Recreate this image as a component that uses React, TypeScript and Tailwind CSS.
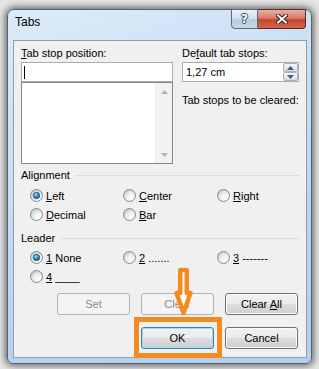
import React from "react";

function Radio({ checked }: { checked?: boolean }) {
  return (
    <svg width="13" height="13" viewBox="0 0 13 13" className="shrink-0">
      <defs>
        <radialGradient id="rOuter" cx="65%" cy="70%" r="75%">
          <stop offset="0" stopColor="#fdfdfd" />
          <stop offset="0.55" stopColor="#ececec" />
          <stop offset="1" stopColor="#c4c4c4" />
        </radialGradient>
        <radialGradient id="rDot" cx="40%" cy="35%" r="70%">
          <stop offset="0" stopColor="#aee6ff" />
          <stop offset="0.45" stopColor="#3a92d0" />
          <stop offset="1" stopColor="#124a7c" />
        </radialGradient>
      </defs>
      <circle cx="6.5" cy="6.5" r="6" fill="url(#rOuter)" stroke="#8a8a8a" strokeWidth="1" />
      {checked && <circle cx="6.5" cy="6.5" r="3.2" fill="url(#rDot)" stroke="#1d4f7a" strokeWidth="0.7" />}
    </svg>
  );
}

function RadioItem({ checked, children }: { checked?: boolean; children: React.ReactNode }) {
  return (
    <div className="flex items-center gap-[3px] h-[19px]">
      <Radio checked={checked} />
      <span className="whitespace-pre">{children}</span>
    </div>
  );
}

function Btn({ children, kind }: { children: React.ReactNode; kind: "normal" | "disabled" | "default" }) {
  const cls =
    kind === "disabled"
      ? "w-[73px] h-[22px] rounded-[3px] border border-[#adb2b5] bg-[#f4f4f4] text-[#8a8a8a] flex items-center justify-center"
      : kind === "default"
      ? "w-[73px] h-[22px] rounded-[3px] border border-[#3c7fb1] bg-[linear-gradient(#f2f2f2_0%,#ebebeb_50%,#dddddd_50%,#cfcfcf_100%)] shadow-[inset_0_0_0_1px_#9fdcfb] flex items-center justify-center"
      : "w-[73px] h-[22px] rounded-[3px] border border-[#707070] bg-[linear-gradient(#f2f2f2_0%,#ebebeb_50%,#dddddd_50%,#cfcfcf_100%)] shadow-[inset_0_0_0_1px_#fbfbfb] flex items-center justify-center";
  return (
    <div className={cls}>
      <span className="whitespace-pre">{children}</span>
    </div>
  );
}

function Tri({ up, color }: { up?: boolean; color: string }) {
  return (
    <svg width="7" height="4" viewBox="0 0 7 4">
      {up ? <polygon points="0,4 7,4 3.5,0" fill={color} /> : <polygon points="0,0 7,0 3.5,4" fill={color} />}
    </svg>
  );
}

function GroupHeader({ label }: { label: React.ReactNode }) {
  return (
    <div className="flex items-center h-[14px] pl-[7px] pr-[6px] gap-[5px]">
      <span>{label}</span>
      <div className="flex-1 h-px bg-[#d5dfe5]" />
    </div>
  );
}

export default function App() {
  return (
    <div className="relative w-[319px] h-[369px] overflow-hidden bg-[#e6e6e6] pl-[7px] pt-[9px] font-['Liberation_Sans',Arial,sans-serif] text-[11px] leading-[14px] text-black">
      <div className="flex flex-col w-[305px] h-[355px] rounded-t-[7px] rounded-b-[6px] border border-[#4f6378] bg-[linear-gradient(160deg,#dcebf9_0%,#c9dff3_35%,#b9d3ed_70%,#b4cfeb_100%)] shadow-[0_0_7px_2px_rgba(0,0,0,0.55)]">
        {/* title bar */}
        <div className="flex justify-between h-[30px] shrink-0">
          <div className="pl-[7px] pt-[5px] text-[12px] leading-[15px]">Tabs</div>
          <div className="flex mr-[5px] -mt-px h-[20px]">
            <div className="w-[27px] h-[20px] rounded-bl-[4px] border border-[#5b6a7c] bg-[linear-gradient(#e9f0f8_0%,#d3e0ee_45%,#b9cbde_55%,#c6d6e7_100%)] flex items-center justify-center">
              <span className="font-['DejaVu_Sans',sans-serif] font-bold text-[12px] leading-[12px] text-white [text-shadow:1px_0_0_#33475c,-1px_0_0_#33475c,0_1px_0_#33475c,0_-1px_0_#33475c]">
                ?
              </span>
            </div>
            <div className="w-[48px] h-[20px] rounded-br-[4px] border border-l-0 border-[#5b2a24] bg-[linear-gradient(#eab0a4_0%,#d87a6a_45%,#c7432f_55%,#d2664f_100%)] flex items-center justify-center">
              <svg width="12" height="10" viewBox="0 0 12 10">
                <path d="M2 1.5 L10 8.5 M10 1.5 L2 8.5" stroke="#3b1d1a" strokeWidth="4" strokeLinecap="square" />
                <path d="M2 1.5 L10 8.5 M10 1.5 L2 8.5" stroke="#ffffff" strokeWidth="2" strokeLinecap="square" />
              </svg>
            </div>
          </div>
        </div>

        {/* client area */}
        <div className="ml-[5px] w-[294px] h-[318px] shrink-0 border border-[#8e9eaf] bg-[#f0f0f0] flex flex-col">
          <div className="flex pt-[5px] pl-[7px] gap-[9px]">
            {/* left column */}
            <div className="w-[152px] flex flex-col">
              <div className="h-[14px]">
                <u>T</u>ab stop position:
              </div>
              <div className="mt-[2px] h-[20px] border border-[#abadb3] bg-white flex items-center pl-[2px]">
                <div className="w-px h-[13px] bg-black" />
              </div>
              <div className="h-[82px] border border-[#828790] bg-white flex justify-end">
                <div className="w-[17px] h-full bg-[#f2f2f2] border-l border-[#ececec] flex flex-col justify-between">
                  <div className="h-[17px] flex items-center justify-center">
                    <Tri up color="#b4b4b4" />
                  </div>
                  <div className="h-[17px] flex items-center justify-center">
                    <Tri color="#b4b4b4" />
                  </div>
                </div>
              </div>
            </div>
            {/* right column */}
            <div className="w-[117px] flex flex-col">
              <div className="h-[14px]">
                De<u>f</u>ault tab stops:
              </div>
              <div className="mt-[2px] h-[20px] border border-[#abadb3] bg-white flex">
                <div className="flex-1 flex items-center pl-[3px]">1,27 cm</div>
                <div className="w-[15px] flex flex-col">
                  <div className="h-[9px] rounded-[2px] border border-[#a9b3bf] bg-[linear-gradient(#f7f7f7,#dcdcdc)] flex items-center justify-center">
                    <Tri up color="#3f5b9a" />
                  </div>
                  <div className="h-[9px] rounded-[2px] border border-[#a9b3bf] bg-[linear-gradient(#f7f7f7,#dcdcdc)] flex items-center justify-center">
                    <Tri color="#3f5b9a" />
                  </div>
                </div>
              </div>
              <div className="mt-[11px] h-[14px] whitespace-nowrap">Tab stops to be cleared:</div>
            </div>
          </div>

          <div className="mt-[4px]">
            <GroupHeader label="Alignment" />
          </div>
          <div className="mt-[4px] grid grid-cols-[93px_94px_1fr] pl-[16px]">
            <RadioItem checked>
              <u>L</u>eft
            </RadioItem>
            <RadioItem>
              <u>C</u>enter
            </RadioItem>
            <RadioItem>
              <u>R</u>ight
            </RadioItem>
            <RadioItem>
              <u>D</u>ecimal
            </RadioItem>
            <RadioItem>
              <u>B</u>ar
            </RadioItem>
          </div>

          <div className="mt-[7px]">
            <GroupHeader label="Leader" />
          </div>
          <div className="mt-[3px] grid grid-cols-[93px_94px_1fr] pl-[16px]">
            <RadioItem checked>
              <u>1</u> None
            </RadioItem>
            <RadioItem>
              <u>2</u> .......
            </RadioItem>
            <RadioItem>
              <u>3</u> -------
            </RadioItem>
            <RadioItem>
              <u>4</u> ____
            </RadioItem>
          </div>

          <div className="mt-[7px] flex justify-end gap-[11px] pr-[8px]">
            <Btn kind="disabled">Set</Btn>
            <Btn kind="disabled">Clear</Btn>
            <Btn kind="normal">
              Clear <u>A</u>ll
            </Btn>
          </div>
          <div className="mt-[12px] flex justify-end gap-[11px] pr-[8px]">
            <Btn kind="default">OK</Btn>
            <Btn kind="normal">Cancel</Btn>
          </div>
        </div>
      </div>

      {/* orange annotation overlay */}
      <div className="absolute left-[134px] top-[317px] w-[88px] h-[41px] border-[5px] border-[#f58a1f]" />
      <svg className="absolute left-[170px] top-[262px]" width="30" height="60" viewBox="0 0 30 60">
        <polygon
          points="10.25,8 16.75,8 16.75,31 20.5,31 13.5,51 6.5,31 10.25,31"
          fill="#ffffff"
          stroke="#f58a1f"
          strokeWidth="4.5"
          strokeLinejoin="round"
        />
      </svg>
    </div>
  );
}
